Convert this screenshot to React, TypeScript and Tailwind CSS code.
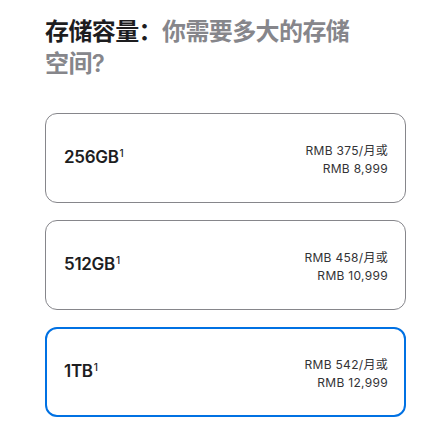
import React, { useState } from 'react';

interface StorageOption {
  id: string;
  size: string;
  monthly: string;
  full: string;
}

const options: StorageOption[] = [
  { id: '256', size: '256GB', monthly: 'RMB 375/月或', full: 'RMB 8,999' },
  { id: '512', size: '512GB', monthly: 'RMB 458/月或', full: 'RMB 10,999' },
  { id: '1tb', size: '1TB', monthly: 'RMB 542/月或', full: 'RMB 12,999' },
];

const font = { fontFamily: 'Inter, "Noto Sans CJK SC", sans-serif' };

export default function App() {
  const [selected, setSelected] = useState<string>('1tb');

  return (
    <div className="w-[446px] h-[438px] bg-white pl-[45px] pr-[40px] pt-[16px]" style={font}>
      <h2 className="max-w-[320px] text-[24px] leading-[32px] font-semibold tracking-[-0.6px] text-[#86868b]">
        <span className="text-[#1d1d1f]">存储容量：</span>你需要多大的存储空间?
      </h2>

      <div className="mt-[33px] flex flex-col gap-[17px]">
        {options.map((opt) => {
          const active = selected === opt.id;
          return (
            <button
              key={opt.id}
              onClick={() => setSelected(opt.id)}
              className={
                active
                  ? 'h-[90px] w-full rounded-[12px] border-2 border-[#0071e3] pl-[17px] pr-[16px] flex items-center justify-between text-left'
                  : 'h-[90px] w-full rounded-[12px] border border-[#86868b] pl-[18px] pr-[17px] flex items-center justify-between text-left'
              }
            >
              <span className="text-[17px] font-semibold text-[#1d1d1f] tracking-[-0.3px]">
                {opt.size}
                <span className="text-[10px] font-medium align-super ml-[1px]">1</span>
              </span>
              <span className="text-right text-[12px] leading-[18px] text-[#333336] tracking-[0.3px] pt-[3px]">
                <span className="block">{opt.monthly}</span>
                <span className="block">{opt.full}</span>
              </span>
            </button>
          );
        })}
      </div>
    </div>
  );
}
